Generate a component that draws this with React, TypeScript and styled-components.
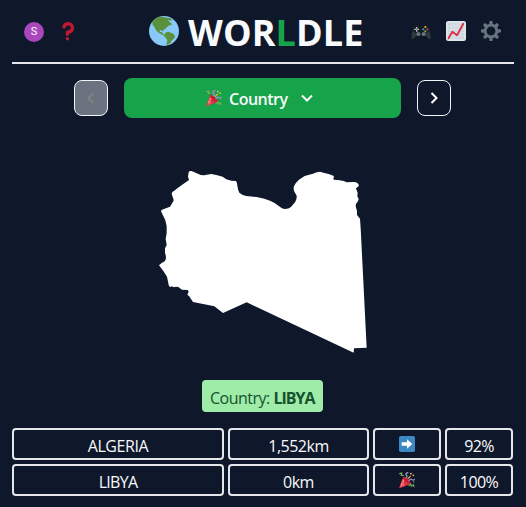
import React from "react";
import styled, { createGlobalStyle } from "styled-components";

const GlobalStyle = createGlobalStyle`
  *, *::before, *::after { box-sizing: border-box; }
  body {
    margin: 0;
    background: #0f172a;
    color: #f8fafc;
    font-family: "Open Sans", "Noto Sans", sans-serif;
    font-size: 16px;
    line-height: 24px;
  }
  button { font: inherit; color: inherit; padding: 0; }
  svg { display: block; flex: none; }
`;

const Page = styled.main`
  width: 526px;
  height: 507px;
  padding: 0 12px;
  overflow: hidden;
  display: flex;
  flex-direction: column;
`;

const Header = styled.header`
  height: 64px;
  flex: none;
  display: flex;
  align-items: center;
  justify-content: space-between;
  border-bottom: 2px solid #e5e7eb;
  padding: 0 13px 0 12px;
`;

const IconGroup = styled.div<{ $gap: number; $width: number }>`
  display: flex;
  align-items: center;
  gap: ${(p) => p.$gap}px;
  width: ${(p) => p.$width}px;
`;

const Avatar = styled.div`
  width: 20px;
  height: 20px;
  margin-top: 2px;
  border-radius: 50%;
  background: #ab47bc;
  font: 11px/20px Roboto, sans-serif;
  text-align: center;
`;

const Brand = styled.div`
  display: flex;
  align-items: center;
  gap: 9px;
  margin-left: 24px;
`;

const Title = styled.h1`
  margin: 4px 0 0;
  width: 176px;
  font-size: 36px;
  line-height: 40px;
  font-weight: 700;
  letter-spacing: 0.1px;
  white-space: nowrap;
`;

const Accent = styled.span`
  color: #16a34a;
`;

const ModeBar = styled.nav`
  display: flex;
  align-items: center;
  gap: 16px;
  height: 40px;
  margin: 14px 0 0 62px;
`;

const StepButton = styled.button<{ $muted?: boolean }>`
  width: 34px;
  height: 36px;
  display: grid;
  place-items: center;
  border: 1px solid #f1f5f9;
  border-radius: 8px;
  background: ${(p) => (p.$muted ? "#6b7280" : "transparent")};
  color: ${(p) => (p.$muted ? "#83817f" : "#fff")};
`;

const ModeButton = styled.button`
  width: 277px;
  height: 40px;
  display: flex;
  align-items: center;
  padding: 0 0 0 82px;
  border: 0;
  border-radius: 8px;
  background: #16a34a;
`;

const ModeName = styled.span`
  width: 60px;
  margin: 2px 12px 0 7px;
  font-weight: 600;
  letter-spacing: -0.5px;
  text-align: left;
`;

const MapArea = styled.section`
  height: 262px;
  padding: 42px 0 0 138px;
`;

const Answer = styled.div`
  align-self: center;
  width: 121px;
  height: 32px;
  margin-right: 1px;
  padding: 6px 0 0 8px;
  border-radius: 4px;
  background: #9feba8;
  color: #14532d;
  white-space: nowrap;
  letter-spacing: -0.5px;
`;

const AnswerName = styled.b`
  font-weight: 700;
  letter-spacing: -1px;
`;

const Guesses = styled.section`
  display: grid;
  grid-template-columns: 212px 141px 68px 68px;
  grid-auto-rows: 32px;
  gap: 4px;
  margin-top: 16px;
`;

const Cell = styled.div<{ $tracking?: number }>`
  display: flex;
  align-items: center;
  justify-content: center;
  border: 2px solid #e5e7eb;
  border-radius: 4px;
  padding-top: 3px;
  letter-spacing: ${(p) => p.$tracking ?? 0}px;
`;

const IconCell = styled(Cell)`
  padding-top: 0;
`;

const Globe = () => (
  <svg width="30" height="30" viewBox="0 0 90 90">
    <circle cx="45" cy="45" r="45" fill="#88c9f9" />
    <path
      fill="#5c913b"
      d="M10 18 15 11 23 5 31 3 38 2 45 4 54 5 63 6 69 11 67 15 63 13 57 13 61 17 67 22 69 28 62 27 58 31 53 34 50 38 43 42 42 47 38 43 32 43 33 48 39 49 43 55 49 57 49 61 42 58 34 53 26 48 20 41 17 34 11 27ZM51 49 58 47 66 50 73 53 78 60 76 67 69 73 64 81 56 87 52 84 55 75 53 69 47 62 46 56Z"
    />
  </svg>
);

const Question = () => (
  <svg width="20" height="20" viewBox="0 0 36 36" fill="#be1931">
    <path d="M17 27c-1.657 0-3-1.343-3-3v-4c0-1.657 1.343-3 3-3 .603-.006 6-1 6-5 0-2-2-4-5-4-2.441 0-4 2-4 3 0 1.657-1.343 3-3 3s-3-1.343-3-3c0-4.878 4.58-9 10-9 8 0 11 5.982 11 11 0 4.145-2.277 7.313-6.413 8.92-.9.351-1.79.587-2.587.747V24c0 1.657-1.343 3-3 3z" />
    <circle cx="17" cy="32" r="3" />
  </svg>
);

const Gamepad = () => (
  <svg width="20" height="20" viewBox="0 0 60 60">
    <path fill="#31373d" d="M1 50 2 38 6 26 9 17 17 12 24 15H36L43 12 51 17 54 26 58 38 60 50Q57 58 50 51L43 43H17L10 51Q3 58 1 50Z" />
    <path fill="#171b20" d="M9 17 17 12 24 15H36L43 12 51 17 53 31 43 39H17L7 31Z" />
    <path fill="#c5ced6" d="M15 18h4v5h5v4h-5v5h-4v-5h-5v-4h5Z" />
    <circle cx="17" cy="25" r="3" fill="#66757f" />
    <circle cx="22" cy="39" r="6" fill="#66757f" />
    <circle cx="38" cy="39" r="6" fill="#66757f" />
    <circle cx="43" cy="18" r="3.2" fill="#f4b32f" />
    <circle cx="37" cy="25" r="3.2" fill="#269bd5" />
    <circle cx="49" cy="25" r="3.2" fill="#e32c43" />
    <circle cx="43" cy="31" r="3.2" fill="#78b159" />
  </svg>
);

const Chart = () => (
  <svg width="20" height="20" viewBox="0 0 36 36">
    <rect width="36" height="36" rx="4" fill="#e1e8ed" />
    <path fill="#ccd6dd" d="M3 3h30v30H3Z" />
    <path stroke="#e1e8ed" strokeWidth="1.2" d="M9 3v30M15 3v30M21 3v30M27 3v30M3 9h30M3 15h30M3 21h30M3 27h30" />
    <path fill="none" stroke="#dd2e44" strokeWidth="3.4" strokeLinecap="round" strokeLinejoin="round" d="m4.5 31 7-11.5 8.500 6L31 5" />
  </svg>
);

const Gear = () => (
  <svg width="20" height="20" viewBox="0 0 36 36" fill="#66757f">
    <path d="M34 15h-3.362c-.324-1.369-.864-2.651-1.582-3.814l2.379-2.379c.781-.781.781-2.048 0-2.829l-1.414-1.414c-.781-.781-2.047-.781-2.828 0l-2.379 2.379C23.65 6.225 22.369 5.686 21 5.362V2c0-1.104-.896-2-2-2h-2c-1.104 0-2 .896-2 2v3.362c-1.369.324-2.651.864-3.814 1.582L8.808 4.565c-.781-.781-2.048-.781-2.828 0L4.565 5.979c-.781.781-.781 2.048-.001 2.829l2.379 2.379C6.225 12.35 5.686 13.632 5.362 15H2c-1.104 0-2 .896-2 2v2c0 1.104.896 2 2 2h3.362c.324 1.368.864 2.65 1.582 3.813l-2.379 2.379c-.78.78-.78 2.048.001 2.829l1.414 1.414c.78.78 2.047.78 2.828 0l2.379-2.379c1.163.719 2.445 1.258 3.814 1.582V34c0 1.104.896 2 2 2h2c1.104 0 2-.896 2-2v-3.362c1.368-.324 2.65-.864 3.813-1.582l2.379 2.379c.781.781 2.047.781 2.828 0l1.414-1.414c.781-.781.781-2.048 0-2.829l-2.379-2.379c.719-1.163 1.258-2.445 1.582-3.814H34c1.104 0 2-.896 2-2v-2c0-1.104-.896-2-2-2zM18 26c-4.418 0-8-3.582-8-8s3.582-8 8-8 8 3.582 8 8-3.582 8-8 8z" />
  </svg>
);

const Party = () => (
  <svg width="16" height="16" viewBox="0 0 48 48">
    <path fill="#dd2e44" d="M1 46 13 14Q18 13 27 22T35 36L3 48Q0 49 1 46Z" />
    <path fill="#ea596e" d="m3 44 9-25 5 22-12 5Z" />
    <path fill="#a0041e" d="M13 14q8-1 16 9t6 13q-8 0-15-8t-7-14Z" opacity=".45" />
    <g fill="none" strokeWidth="3.500" strokeLinecap="round">
      <path stroke="#77b255" d="m2 5 6-2-1 7 6 0M30 40l5-4 2 7 6-5 2 6" />
      <path stroke="#aa8dd8" d="M21 17q6-4 1-8t5-7M30 26q5-7 9-3t7-1" />
      <path stroke="#e8b82f" d="m27 20 5-5" />
    </g>
    <g fill="#ffcc4d">
      <circle cx="36" cy="5" r="2.500" />
      <circle cx="43" cy="10" r="2.500" />
      <circle cx="34" cy="13" r="2" />
      <circle cx="8" cy="36" r="2" />
      <circle cx="13" cy="27" r="2" />
    </g>
    <circle cx="44" cy="30" r="2.500" fill="#5c913b" />
  </svg>
);

const ArrowRight = () => (
  <svg width="16" height="16" viewBox="0 0 36 36">
    <rect width="36" height="36" rx="4" fill="#3b88c3" />
    <path fill="#fff" d="m30 18-12-10.500v6.500H6v8h12v6.500Z" />
  </svg>
);

const Chevron = ({ d, width = 8, height = 12 }: { d: string; width?: number; height?: number }) => (
  <svg width={width} height={height} viewBox={`0 0 ${width} ${height}`} fill="none" stroke="currentColor" strokeWidth="2">
    <path d={d} />
  </svg>
);

const CountryShape = () => (
  <svg width="226" height="200" viewBox="0 0 678 600" fill="#fff">
    <path d="M118 34Q124 31 130 35L145 42Q155 47 166 45L184 42 202 46 218 50 229 58 244 62 258 63Q261 66 262 77 264 91 268 98 277 106 289 108L320 111 343 116 360 122Q373 127 383 136 396 147 405 147 416 147 423 141L436 125Q441 116 440 107L435 98Q429 90 432 79 438 66 447 59L464 48 489 41Q496 36 510 35L523 39 536 42 550 47Q554 51 549 57 553 61 564 60L581 63 590 67 609 66Q617 65 622 69L627 75Q627 79 618 85L620 91 623 99 622 109 626 117 624 124Q617 131 617 139L621 153 621 165 630 176 632 205 650 563 612 565 611 578 290 427 219 459 193 439 129 426 123 417Q118 407 112 404L116 395 113 390 96 389 85 381 77 380 72 382 65 379 60 382Q55 377 55 370L51 350 40 333 27 316 34 310 45 303 48 295Q48 286 45 279L45 265 50 255 47 236 50 220 50 199 46 181 33 154Q33 150 40 148L60 140 70 124Q72 119 68 111L65 101Q65 95 73 92L83 84 101 71 117 60 114 50 116 37Z" />
  </svg>
);

type Guess = { name: string; nameTracking: number; distance: string; hint: React.ReactNode; score: string };

const guesses: Guess[] = [
  { name: "ALGERIA", nameTracking: -0.4, distance: "1,552km", hint: <ArrowRight />, score: "92%" },
  { name: "LIBYA", nameTracking: -0.7, distance: "0km", hint: <Party />, score: "100%" },
];

export default function App() {
  return (
    <Page>
      <GlobalStyle />
      <Header>
        <IconGroup $gap={14} $width={54}>
          <Avatar>S</Avatar>
          <Question />
        </IconGroup>
        <Brand>
          <Globe />
          <Title>
            WOR<Accent>L</Accent>DLE
          </Title>
        </Brand>
        <IconGroup $gap={15} $width={90}>
          <Gamepad />
          <Chart />
          <Gear />
        </IconGroup>
      </Header>
      <ModeBar>
        <StepButton $muted aria-label="Previous" disabled>
          <Chevron d="M6.500 1 1.500 6l5 5" />
        </StepButton>
        <ModeButton>
          <Party />
          <ModeName>Country</ModeName>
          <Chevron d="m1 2.500 5 5 5-5" width={12} height={10} />
        </ModeButton>
        <StepButton aria-label="Next">
          <Chevron d="m1.500 1 5 5-5 5" />
        </StepButton>
      </ModeBar>
      <MapArea>
        <CountryShape />
      </MapArea>
      <Answer>
        Country: <AnswerName>LIBYA</AnswerName>
      </Answer>
      <Guesses>
        {guesses.map((g) => (
          <React.Fragment key={g.name}>
            <Cell $tracking={g.nameTracking}>{g.name}</Cell>
            <Cell $tracking={-0.5}>{g.distance}</Cell>
            <IconCell>{g.hint}</IconCell>
            <Cell $tracking={-0.6}>{g.score}</Cell>
          </React.Fragment>
        ))}
      </Guesses>
    </Page>
  );
}
